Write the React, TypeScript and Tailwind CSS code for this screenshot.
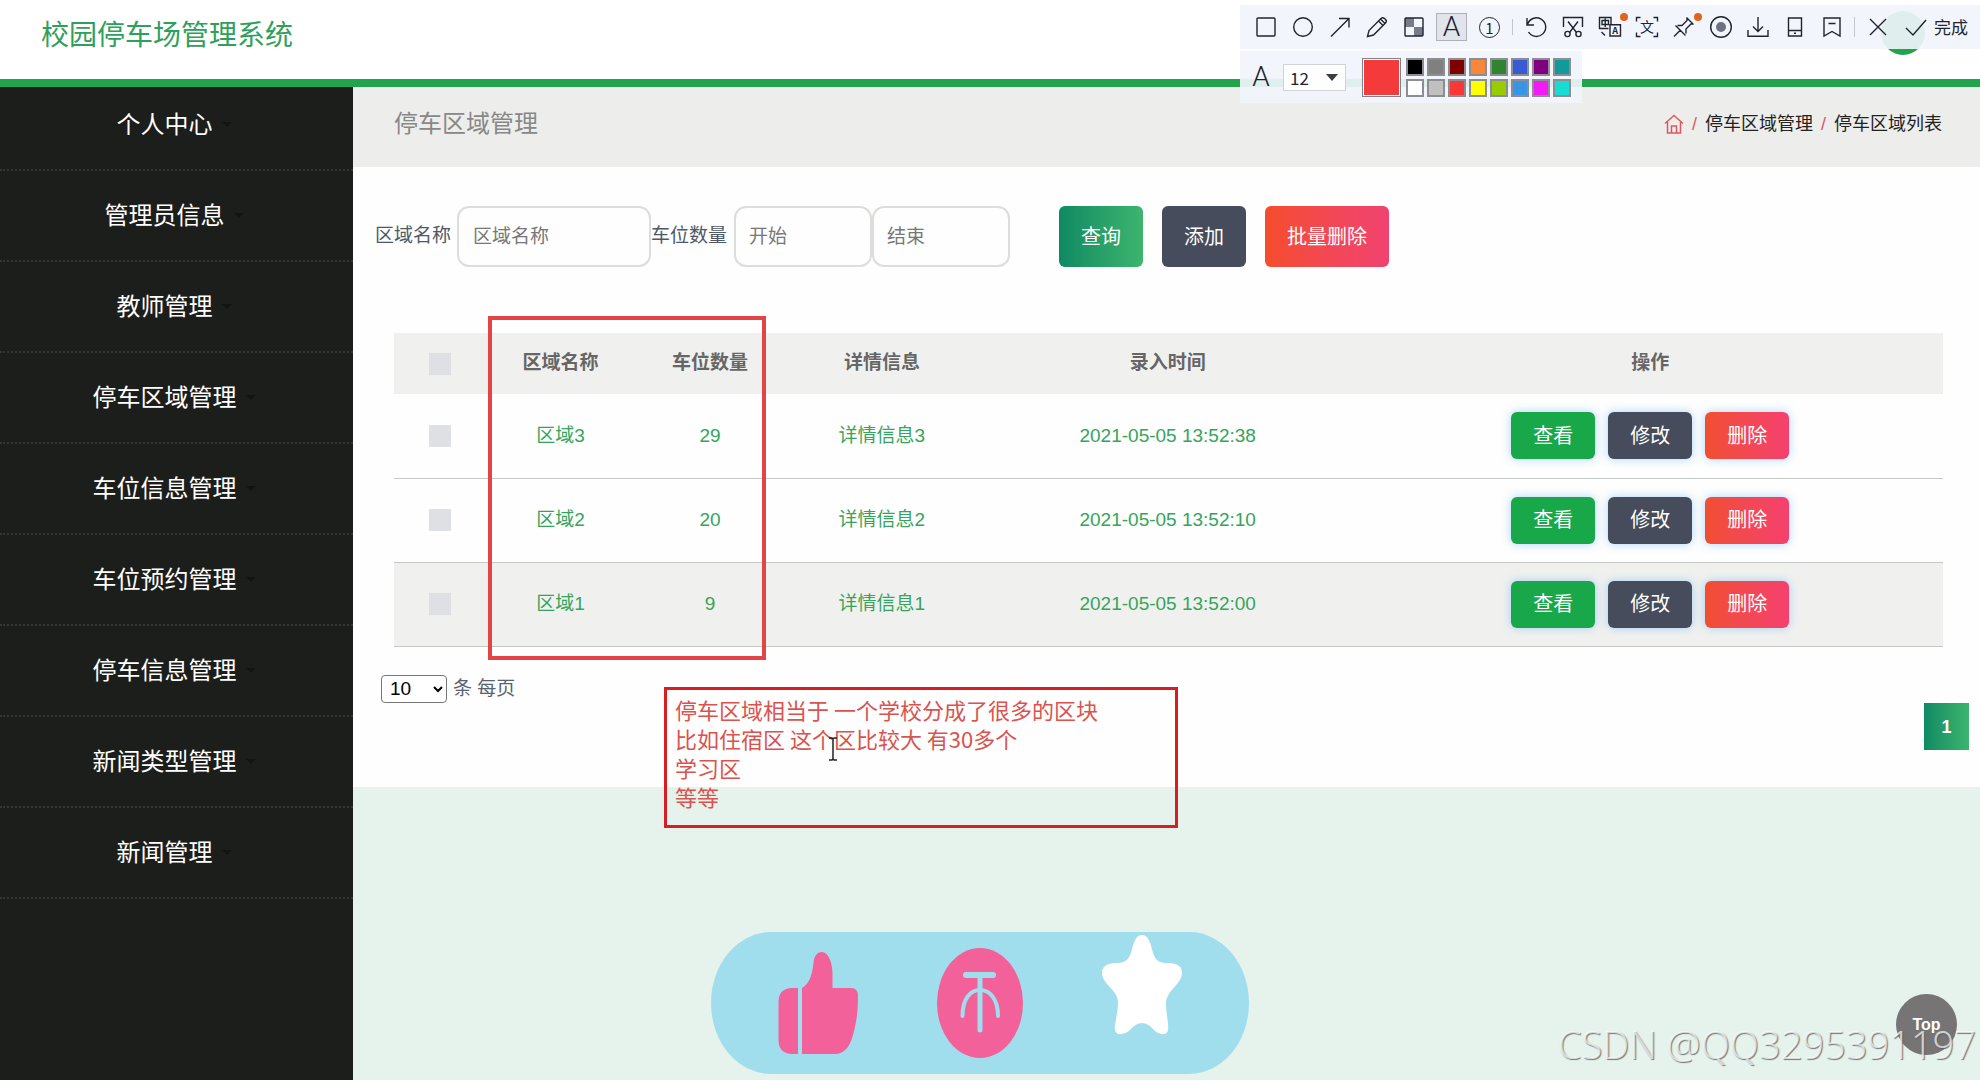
import { useState } from "react";
import type { ReactNode } from "react";

const menuItems = [
  "个人中心",
  "管理员信息",
  "教师管理",
  "停车区域管理",
  "车位信息管理",
  "车位预约管理",
  "停车信息管理",
  "新闻类型管理",
  "新闻管理",
];

const areas = [
  { id: 3, name: "区域3", count: 29, detail: "详情信息3", time: "2021-05-05 13:52:38" },
  { id: 2, name: "区域2", count: 20, detail: "详情信息2", time: "2021-05-05 13:52:10" },
  { id: 1, name: "区域1", count: 9, detail: "详情信息1", time: "2021-05-05 13:52:00" },
];

const swatches = [
  "bg-black",
  "bg-[#808080]",
  "bg-[#800000]",
  "bg-[#f7883a]",
  "bg-[#308430]",
  "bg-[#385ad3]",
  "bg-[#800080]",
  "bg-[#109a99]",
  "bg-white",
  "bg-[#c0c0c0]",
  "bg-[#fb3838]",
  "bg-[#ffff00]",
  "bg-[#99cc00]",
  "bg-[#3894e4]",
  "bg-[#f31bf3]",
  "bg-[#16dcd4]",
];

const Icon = ({ children }: { children: ReactNode }) => (
  <svg
    viewBox="0 0 24 24"
    className="size-6 overflow-visible"
    fill="none"
    stroke="#1f2430"
    strokeWidth="1.4"
  >
    {children}
  </svg>
);

const drawTools = [
  { label: "矩形", icon: <Icon><rect x="3" y="3" width="18" height="18" rx="1" /></Icon> },
  { label: "椭圆", icon: <Icon><circle cx="12" cy="12" r="9.3" /></Icon> },
  { label: "箭头", icon: <Icon><path d="M3 21.500L21 3.500M11 3.500h10v9" /></Icon> },
  {
    label: "画笔",
    icon: (
      <Icon>
        <path d="M2.500 21.500l1.500-6L16 3.500a2.500 2.500 0 0 1 3.500 0l1 1a2.500 2.500 0 0 1 0 3.500L8.500 20zM13.500 6l4.500 4.500M15.500 4l4.500 4.500" />
      </Icon>
    ),
  },
  {
    label: "马赛克",
    icon: (
      <Icon>
        <path d="M3 3h9v9H3zM12 12h9v9h-9z" fill="#767c88" stroke="none" />
        <rect x="3" y="3" width="18" height="18" rx="1" />
      </Icon>
    ),
  },
];

const actionTools = [
  { label: "撤销", icon: <Icon><path d="M3 3v7h7M3.500 9.500A9.300 9.300 0 1 1 4.500 17" /></Icon> },
  {
    label: "裁剪",
    icon: (
      <Icon>
        <path d="M2.500 12V2.500h19V12M7 6.500l8.500 11M17 6.500l-8.500 11" />
        <circle cx="6.500" cy="19" r="2.600" />
        <circle cx="17.500" cy="19" r="2.600" />
      </Icon>
    ),
  },
  {
    label: "翻译",
    badge: true,
    icon: (
      <Icon>
        <path d="M10.500 13.500h-9v-11h11.500V9M4 5.500h6.500v4H4zM7.200 3.500v8.500M3.500 17l3.500 3.500M12 9.700h10.500v11.300H12z" />
        <text x="17.200" y="18.800" fontSize="9" fontWeight="700" textAnchor="middle" fill="#1f2430" stroke="none">A</text>
      </Icon>
    ),
  },
  {
    label: "文字识别",
    icon: (
      <Icon>
        <path d="M5.500 2.500h-4V6.500M18.500 2.500h4V6.500M5.500 21.500h-4V17.500M18.500 21.500h4V17.500" />
        <text x="12" y="17" fontSize="14" textAnchor="middle" fill="#1f2430" stroke="none">文</text>
      </Icon>
    ),
  },
  {
    label: "固定",
    badge: true,
    icon: (
      <Icon>
        <path d="M2 21.500l6.500-6.500M3.500 10.500L13.500 20.500M5.500 10.500l4.500 0L15 5.500V3M14 18.500V14l5-5h2.500M14.500 2.500l7 7" />
      </Icon>
    ),
  },
  {
    label: "录屏",
    icon: (
      <Icon>
        <circle cx="12" cy="12" r="10.300" />
        <circle cx="12" cy="12" r="5" fill="#6c7280" stroke="none" />
      </Icon>
    ),
  },
  { label: "保存", icon: <Icon><path d="M12 2v14M7 11.500l5 5 5-5M2 15v6.300h20V15" /></Icon> },
  { label: "手机", icon: <Icon><path d="M5.500 3h13v18h-13zM5.500 15.500h13M11 18.300h2" /></Icon> },
  { label: "收藏", icon: <Icon><path d="M4 3h16v18l-8-4.500L4 21zM8.500 8.500h7" /></Icon> },
];

const ToolButton = ({ label, badge, children }: { label: string; badge?: boolean; children: ReactNode }) => (
  <button aria-label={label} className="relative w-[37px] h-11 flex items-center justify-center">
    {children}
    {badge && <span className="absolute right-0 top-2 size-2 rounded-full bg-[#e0641e]" />}
  </button>
);

const CaptureToolbar = () => (
  <div className="absolute right-0 top-[5px] z-20 font-['Noto_Sans_CJK_SC',sans-serif] text-[#1f2430]">
    <div className="flex items-center h-11 pl-[7px] pr-3 bg-[#f1f5fc]/92">
      {drawTools.map((tool) => (
        <ToolButton key={tool.label} label={tool.label}>{tool.icon}</ToolButton>
      ))}
      <button className="w-[31px] h-7 mx-1 flex items-center justify-center border border-[#aeb2b8] bg-[#e1e4ea] font-['Roboto',sans-serif] font-light text-[28px] leading-none">
        A
      </button>
      <ToolButton label="序号">
        <span className="size-[21px] rounded-full border border-[#1f2430] flex items-center justify-center text-[15px] leading-none">
          1
        </span>
      </ToolButton>
      <span className="w-px h-4 mx-1 bg-[#c3c7ce]" />
      {actionTools.map((tool) => (
        <ToolButton key={tool.label} label={tool.label} badge={tool.badge}>{tool.icon}</ToolButton>
      ))}
      <span className="w-px h-5 mx-1 bg-[#c3c7ce]" />
      <ToolButton label="关闭"><Icon><path d="M4 4l16 16M20 4L4 20" /></Icon></ToolButton>
      <button className="flex items-center gap-[6px] text-[17px] ml-2">
        <Icon><path d="M2 13l7 7L22 5" /></Icon>
        完成
      </button>
    </div>
    <div className="mt-[2px] h-[52px] w-[342px] flex items-center pl-[9px] bg-[#f1f5fc]/92">
      <span className="w-6 text-center font-['Roboto',sans-serif] font-light text-[28px] leading-none">A</span>
      <div className="relative ml-[10px]">
        <select
          aria-label="字号"
          defaultValue="12"
          className="appearance-none w-[63px] h-[27px] pl-[6px] bg-[#fdfefd] border border-[#d0d3d8] text-[17px] leading-none"
        >
          <option>12</option>
          <option>16</option>
        </select>
        <svg viewBox="0 0 12 7" className="absolute right-2 top-[10px] w-3 pointer-events-none">
          <path d="M0 0h12L6 7z" fill="#3a3d42" />
        </svg>
      </div>
      <button aria-label="当前颜色" className="ml-4 size-[39px] border border-[#7f8288] bg-[#f43a3a] ring-1 ring-inset ring-white" />
      <div className="ml-[5px] grid grid-cols-8 gap-[3px]">
        {swatches.map((color) => (
          <button key={color} aria-label={color} className={`size-[18px] border-2 border-[#8b8f94] ${color}`} />
        ))}
      </div>
    </div>
  </div>
);

const Sidebar = () => (
  <aside className="w-[353px] shrink-0 bg-[#1c1e1b]">
    <nav className="-mt-[7px]">
      {menuItems.map((item) => (
        <a
          key={item}
          href="#"
          className="h-[91px] flex items-center justify-center gap-2 pr-1 border-b-2 border-dotted border-[#343633] text-2xl text-white"
        >
          {item}
          <svg viewBox="0 0 12 6" className="w-3">
            <path d="M1 0h10L6 5z" fill="#101510" />
          </svg>
        </a>
      ))}
    </nav>
  </aside>
);

const SearchForm = () => (
  <form className="flex items-center pl-[22px] text-[19px] text-[#4f5866]" onSubmit={(e) => e.preventDefault()}>
    <label htmlFor="name" className="mr-[6px]">区域名称</label>
    <input id="name" placeholder="区域名称" className="w-[194px] h-[61px] px-[14px] border-2 border-[#dcdedb] rounded-xl placeholder:text-[#777]" />
    <label htmlFor="from" className="mr-[7px]">车位数量</label>
    <input id="from" placeholder="开始" className="w-[138px] h-[61px] px-[13px] border-2 border-[#dcdedb] rounded-xl placeholder:text-[#777]" />
    <input aria-label="结束" placeholder="结束" className="w-[138px] h-[61px] px-[13px] border-2 border-[#dcdedb] rounded-xl placeholder:text-[#777]" />
    <div className="ml-[49px] flex gap-[19px] text-xl text-white">
      <button className="h-[61px] px-[22px] rounded-md bg-linear-to-r from-[#0d8a62] to-[#3cb56e]">查询</button>
      <button type="button" className="h-[61px] px-[22px] rounded-md bg-[#464c5b]">添加</button>
      <button type="button" className="h-[61px] px-[22px] rounded-md bg-linear-to-r from-[#f54c2b] to-[#f0426f]">批量删除</button>
    </div>
  </form>
);

const checkboxClass = "block mx-auto size-[22px] appearance-none bg-[#dee0e4] checked:bg-[#22a44c]";
const actionClass = "h-[47px] px-[22px] rounded-md shadow-[0_0_9px_rgba(90,170,250,0.5)]";

const AreaTable = () => {
  const [checked, setChecked] = useState<number[]>([]);
  const toggle = (id: number) =>
    setChecked((prev) => (prev.includes(id) ? prev.filter((n) => n !== id) : [...prev, id]));

  return (
    <table className="w-full table-fixed text-center text-[19px]">
      <thead className="bg-[#f0f1ef] text-[#666]">
        <tr className="h-[61px]">
          <th className="w-[6%]">
            <input
              type="checkbox"
              aria-label="全选"
              className={checkboxClass}
              checked={checked.length === areas.length}
              onChange={(e) => setChecked(e.target.checked ? areas.map((a) => a.id) : [])}
            />
          </th>
          <th className="w-[9.5%]">区域名称</th>
          <th className="w-[9.8%]">车位数量</th>
          <th className="w-[12.4%]">详情信息</th>
          <th className="w-[24.5%]">录入时间</th>
          <th>操作</th>
        </tr>
      </thead>
      <tbody className="text-[#36a45c]">
        {areas.map((area) => (
          <tr key={area.id} className="h-[84px] border-b border-[#c6c8c7] last:bg-[#f0f1ef]">
            <td>
              <input
                type="checkbox"
                aria-label={area.name}
                className={checkboxClass}
                checked={checked.includes(area.id)}
                onChange={() => toggle(area.id)}
              />
            </td>
            <td>{area.name}</td>
            <td>{area.count}</td>
            <td>{area.detail}</td>
            <td>{area.time}</td>
            <td>
              <div className="flex justify-center gap-[13px] text-xl text-white">
                <button className={`${actionClass} bg-[#18a84a]`}>查看</button>
                <button className={`${actionClass} bg-[#464c5b]`}>修改</button>
                <button className={`${actionClass} bg-linear-to-r from-[#f14e30] to-[#f5406e]`}>删除</button>
              </div>
            </td>
          </tr>
        ))}
      </tbody>
    </table>
  );
};

const ReactionBar = () => (
  <svg viewBox="0 0 538 142" className="absolute left-[711px] top-[932px] w-[538px]">
    <rect width="538" height="142" rx="60" ry="71" fill="#a1deed" />
    <g fill="#f26199">
      <path d="M87 56H80Q67.500 57 67.500 70V108Q67.500 121 80 122H87z" />
      <path d="M91 56C99 51 101 43 102.500 31C103 23 107 20 111 20C117 20 121.500 30 121.500 42V56H140Q147 56 147 64C147 82 145 92 142 103Q137 122 124 122H91z" />
      <ellipse cx="269" cy="71" rx="43" ry="55" />
    </g>
    <g fill="none" stroke="#a1deed" strokeLinecap="round">
      <path d="M255 43H282" strokeWidth="6" />
      <path d="M269 43V98" strokeWidth="5" />
      <path d="M251.500 84C251.500 66 260 58 269 58C278 58 287 66 287 84" strokeWidth="4" />
    </g>
    <path
      d="M431 3C437 3 439 10 441 17C443 27 447 31 455 31C465 31 471 33 471 41C471 52 455 58 455 72C455 82 458 92 457 98C456 104 448 103 443 98Q431 84 419 98C414 103 405 104 404 98C403 92 407 82 407 70C407 58 391 52 391 41C391 33 398 31 407 31C415 31 419 26 421 17C423 10 425 3 431 3z"
      fill="#fff"
    />
  </svg>
);

const Annotations = () => (
  <>
    <div className="absolute left-[488px] top-[316px] w-[278px] h-[344px] border-4 border-[#e34547]" />
    <div className="absolute left-[664px] top-[687px] w-[514px] h-[141px] border-3 border-[#d81e20] px-2 pt-[5px] font-['Noto_Sans_CJK_SC',sans-serif] text-[22px] leading-[29px] text-[#d9534f]">
      <p>停车区域相当于 一个学校分成了很多的区块</p>
      <p>比如住宿区 这个区比较大 有30多个</p>
      <p>学习区</p>
      <p>等等</p>
    </div>
    <svg viewBox="0 0 10 24" className="absolute left-[828px] top-[737px] w-[10px]" fill="none" stroke="#222" strokeWidth="1.5">
      <path d="M1 1h3l1 1 1-1h3M5 2v20M1 23h3l1-1 1 1h3" />
    </svg>
  </>
);

const App = () => {
  return (
    <div className="relative min-h-screen flex flex-col overflow-hidden bg-[#e5f3ec] font-['Liberation_Sans','Noto_Sans_CJK_SC',sans-serif]">
      <header className="h-[87px] flex items-start justify-between pl-[41px] pr-[55px] pt-[11px] border-b-8 border-[#22a44c] bg-[#fefffe]">
        <h1 className="pt-[5px] text-[28px] leading-10 text-[#2f9f5c]">校园停车场管理系统</h1>
        <div className="size-11 rounded-full bg-[#22a44c]" />
      </header>

      <div className="flex-1 flex">
        <Sidebar />
        <main className="flex-1 min-w-0">
          <div className="h-20 flex items-center justify-between pl-[41px] pr-[38px] pb-[6px] bg-[#edeeec]">
            <h2 className="text-2xl text-[#888]">停车区域管理</h2>
            <div className="flex items-center gap-2 text-lg text-[#222]">
              <a href="#" aria-label="首页">
                <svg viewBox="0 0 20 20" className="w-5" fill="none" stroke="#e0575f" strokeWidth="1.5">
                  <path d="M1 9.500L10 1.500l9 8M3.500 8v11h13V8M7.500 19v-7h5v7" />
                </svg>
              </a>
              <span className="text-[#e0575f]">/</span>
              <a href="#">停车区域管理</a>
              <span className="text-[#e0575f]">/</span>
              <span>停车区域列表</span>
            </div>
          </div>

          <section className="pt-[39px] pb-[37px] bg-[#fdfefd]">
            <SearchForm />
            <div className="mt-[66px] pl-[41px] pr-[37px]">
              <AreaTable />
            </div>
            <div className="mt-7 pl-7 flex items-center gap-[6px] text-[19px] text-[#5a6270]">
              <select id="size" defaultValue="10" className="w-[66px] h-7 pl-1 border border-[#767676] rounded-sm bg-white text-black">
                <option>10</option>
                <option>20</option>
              </select>
              <label htmlFor="size">条 每页</label>
            </div>
            <div className="flex justify-end pr-[11px]">
              <button className="w-[45px] h-[47px] bg-linear-to-r from-[#0d8a62] to-[#3cb56e] font-bold text-lg text-white">1</button>
            </div>
          </section>
        </main>
      </div>

      <ReactionBar />
      <Annotations />
      <CaptureToolbar />

      <button className="absolute right-[23px] bottom-[25px] size-[61px] rounded-full bg-[#777475] font-bold text-base text-white">
        Top
      </button>
      <div className="absolute right-1 bottom-4 font-['Noto_Sans',sans-serif] font-light text-[38px] leading-10 text-white/70 [text-shadow:1px_1px_1px_rgba(90,90,90,0.8)]">
        CSDN @QQ3295391197
      </div>
    </div>
  );
};

export default App;
